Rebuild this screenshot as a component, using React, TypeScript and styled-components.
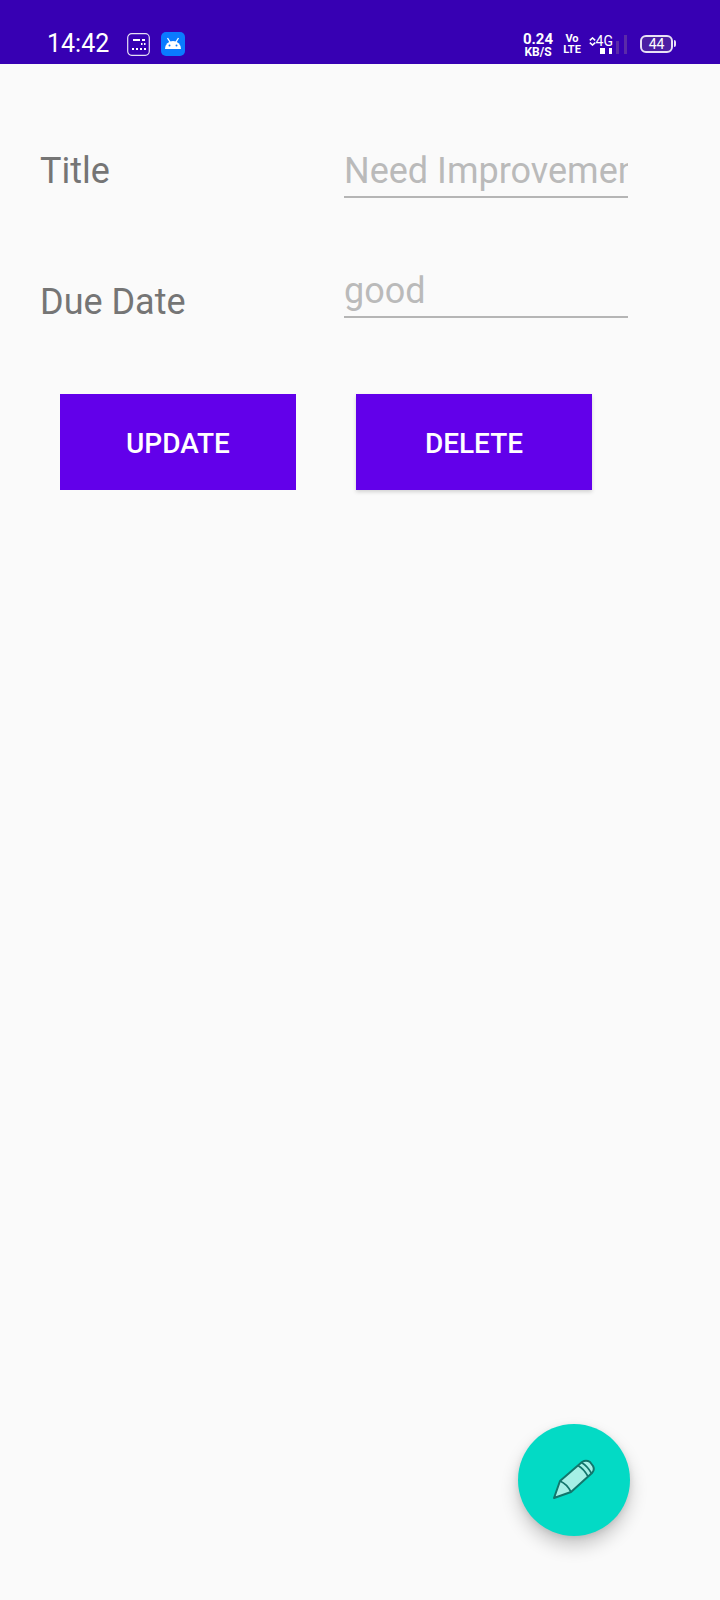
import { createGlobalStyle } from "styled-components"
import styled from "styled-components"

const GlobalStyle = createGlobalStyle`
  html, body {
    margin: 0;
    padding: 0;
    background: #fafafa;
    font-family: Roboto, "Noto Sans", sans-serif;
  }
`

const Screen = styled.div`
  width: 720px;
  height: 1600px;
  background: #fafafa;
  display: flex;
  flex-direction: column;
  position: relative;
  overflow: hidden;
`

const StatusBar = styled.div`
  height: 64px;
  background: #3700b3;
  display: flex;
  align-items: center;
  justify-content: space-between;
  padding: 24px 47px 0 47px;
  box-sizing: border-box;
  color: #fff;
`

const StatusLeft = styled.div`
  display: flex;
  align-items: center;
  gap: 11px;
`

const StatusRight = styled.div`
  display: flex;
  align-items: center;
`

const Clock = styled.div`
  font-size: 25px;
  line-height: 30px;
  width: 69px;
`

const AppBadge = styled.div`
  width: 24px;
  height: 24px;
  border-radius: 5px;
  background: #0a7bff;
  display: flex;
  align-items: center;
  justify-content: center;
`

const Speed = styled.div`
  display: flex;
  flex-direction: column;
  align-items: center;
  font-weight: 700;
  font-size: 15px;
  line-height: 16px;
  width: 34px;

  span {
    font-size: 12px;
    line-height: 11px;
  }
`

const VoLte = styled.div`
  display: flex;
  flex-direction: column;
  align-items: center;
  font-weight: 700;
  font-size: 11px;
  line-height: 11px;
  margin-left: 9px;
  width: 16px;
`

const Network = styled.div`
  display: flex;
  align-items: flex-end;
  height: 19px;
  margin-left: 9px;

  > svg:first-child {
    align-self: flex-start;
    margin: 2px 1px 0 0;
  }
`

const NetworkColumn = styled.div`
  display: flex;
  flex-direction: column;
  align-items: flex-end;
  width: 16px;
`

const NetworkLabel = styled.div`
  font-size: 14px;
  line-height: 11px;
  margin-bottom: 1px;
`

const Battery = styled.div`
  width: 33px;
  height: 18px;
  box-sizing: border-box;
  border: 2px solid #e8e0f5;
  border-radius: 6px;
  background: #4c1fa3;
  color: #fff;
  font-size: 14px;
  line-height: 14px;
  text-align: center;
  margin-left: 12px;
  position: relative;

  &::after {
    content: "";
    position: absolute;
    right: -5px;
    top: 3px;
    width: 2px;
    height: 7px;
    border-radius: 0 2px 2px 0;
    background: #e8e0f5;
  }
`

const Form = styled.div`
  display: flex;
  flex-direction: column;
  padding: 64px 0 0 40px;
`

const Row = styled.div<{ $height: number }>`
  display: grid;
  grid-template-columns: 304px 284px;
  height: ${props => props.$height}px;
`

const Label = styled.div<{ $top: number }>`
  font-size: 36px;
  line-height: 44px;
  color: #757575;
  padding-top: ${props => props.$top}px;
`

const Field = styled.input`
  width: 284px;
  height: 70px;
  box-sizing: border-box;
  padding: 17px 0 0;
  border: 0;
  border-bottom: 2px solid #b5b5b5;
  outline: none;
  background: transparent;
  font-family: inherit;
  font-size: 36px;
  line-height: 44px;

  &::placeholder {
    color: #bababa;
    opacity: 1;
  }
`

const Actions = styled.div`
  display: flex;
  gap: 60px;
  padding: 26px 0 0 60px;
`

const ActionButton = styled.button<{ $raised?: boolean }>`
  width: 236px;
  height: 96px;
  border: 0;
  padding: 2px 0 0;
  background: #6200ea;
  color: #fff;
  font-family: inherit;
  font-size: 28px;
  font-weight: 500;
  box-shadow: ${props => props.$raised ? "0 2px 4px rgba(0, 0, 0, 0.16)" : "none"};
`

const Fab = styled.button`
  position: absolute;
  left: 518px;
  top: 1424px;
  width: 112px;
  height: 112px;
  border: 0;
  padding: 0;
  border-radius: 50%;
  background: #03dac5;
  display: flex;
  align-items: center;
  justify-content: center;
  box-shadow: 0 10px 18px rgba(0, 0, 0, 0.2), 0 2px 6px rgba(0, 0, 0, 0.1);
`

export default function App() {
  return (
    <Screen>
      <GlobalStyle />
      <StatusBar>
        <StatusLeft>
          <Clock>14:42</Clock>
          <svg width="23" height="23" viewBox="0 0 23 23" fill="none">
            <rect x="0.7" y="0.7" width="21.6" height="21.6" rx="4" stroke="#e6dff5" strokeWidth="1.2" />
            <path d="M6 7h7M15 7h3M14 11h1.5M17 11h1.5M5 16h2M9 16h2M13 16h2M17 16h2" stroke="#fff" strokeWidth="2" />
          </svg>
          <AppBadge>
            <svg width="20" height="16" viewBox="0 0 20 16" fill="#fff">
              <path d="M2 13a8 8 0 0 1 16 0z" />
              <path d="M4.5 2 7 6M15.5 2 13 6" stroke="#fff" strokeWidth="1.4" />
              <circle cx="6.5" cy="9.5" r="1" fill="#0a7bff" />
              <circle cx="13.5" cy="9.5" r="1" fill="#0a7bff" />
            </svg>
          </AppBadge>
        </StatusLeft>
        <StatusRight>
          <Speed>
            0.24
            <span>KB/S</span>
          </Speed>
          <VoLte>
            <div>Vo</div>
            <div>LTE</div>
          </VoLte>
          <Network>
            <svg width="7" height="9" viewBox="0 0 7 9" fill="none" stroke="#fff" strokeWidth="1.6">
              <path d="M0.8 3.4 3.5 1l2.7 2.4M0.8 5.6 3.5 8l2.7-2.4" />
            </svg>
            <NetworkColumn>
              <NetworkLabel>4G</NetworkLabel>
              <svg width="13" height="6" viewBox="0 0 13 6" fill="#fff">
                <rect x="0" y="0" width="5" height="6" />
                <rect x="9" y="0" width="3" height="6" />
              </svg>
            </NetworkColumn>
            <svg width="12" height="19" viewBox="0 0 12 19" fill="#5a2aa8" style={{ marginLeft: 3 }}>
              <rect x="0" y="6" width="3" height="13" />
              <rect x="8" y="0" width="3" height="19" />
            </svg>
          </Network>
          <Battery>44</Battery>
        </StatusRight>
      </StatusBar>
      <Form>
        <Row $height={120}>
          <Label $top={21}>Title</Label>
          <Field placeholder="Need Improvement" readOnly />
        </Row>
        <Row $height={120}>
          <Label $top={32}>Due Date</Label>
          <Field placeholder="good" readOnly />
        </Row>
      </Form>
      <Actions>
        <ActionButton>UPDATE</ActionButton>
        <ActionButton $raised>DELETE</ActionButton>
      </Actions>
      <Fab>
        <svg width="44" height="44" viewBox="0 0 44 44" fill="none">
          <path
            d="M2 40 L8 23 L30 4 Q34 1.5 38 4 L41 8 Q43 12 40 15 L19 34 Z"
            fill="#a5f0e6"
            stroke="#12766c"
            strokeWidth="2"
            strokeLinejoin="round"
          />
          <path
            d="M8 23 Q15 26 19 34 M26 7.5 Q32 11 36 18.5 M29.5 4.5 Q35.5 8 39.5 15.5"
            stroke="#12766c"
            strokeWidth="1.8"
          />
        </svg>
      </Fab>
    </Screen>
  )
}
